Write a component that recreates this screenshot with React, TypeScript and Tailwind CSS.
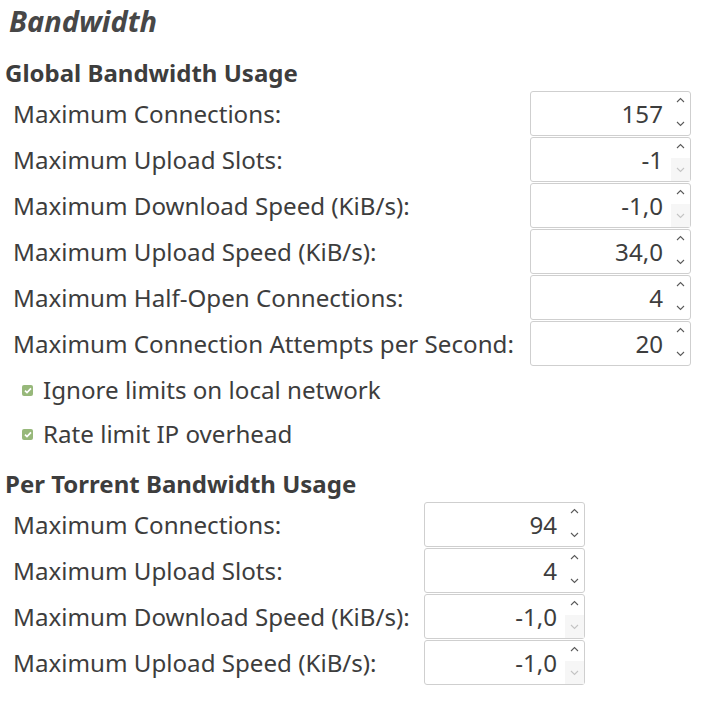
import React from "react";

const font = { fontFamily: '"Noto Sans", "Open Sans", sans-serif' };

function Chevron({ up, faint }: { up?: boolean; faint?: boolean }) {
  return (
    <svg width="9" height="6" viewBox="0 0 9 6" className="block">
      <polyline
        points={up ? "1,5 4.5,1.5 8,5" : "1,1 4.5,4.5 8,1"}
        fill="none"
        stroke={faint ? "#c4c4c4" : "#5a5a5a"}
        strokeWidth="1.1"
      />
    </svg>
  );
}

function Spin({ value, downDisabled }: { value: string; downDisabled?: boolean }) {
  return (
    <div className="flex h-[45px] w-[161px] rounded-[3px] border border-[#cfcfcf] bg-white">
      <div className="flex flex-1 items-center justify-end pr-[8px] pt-[1px] text-[24.15px] leading-none text-[#3d3d3d]">{value}</div>
      <div className="flex w-[19px] flex-col">
        <div className="flex flex-1 items-start justify-center pt-[5px]">
          <Chevron up />
        </div>
        <div
          className={
            downDisabled
              ? "flex flex-1 items-end justify-center bg-[#f6f6f6] pb-[8px]"
              : "flex flex-1 items-end justify-center pb-[8px]"
          }
        >
          <Chevron faint={downDisabled} />
        </div>
      </div>
    </div>
  );
}

function Row({ label, value, labelW, downDisabled }: { label: string; value: string; labelW: string; downDisabled?: boolean }) {
  return (
    <div className="flex items-center">
      <div className={labelW + " pt-[2px] text-[24.15px] leading-none text-[#3d3d3d]"}>{label}</div>
      <Spin value={value} downDisabled={downDisabled} />
    </div>
  );
}

function Check({ label }: { label: string }) {
  return (
    <div className="flex h-[44px] items-center gap-[10px] pl-[22px]">
      <div className="flex h-[11px] w-[11px] items-center justify-center rounded-[2px] bg-[#97b87a]">
        <svg width="8" height="7" viewBox="0 0 8 7">
          <polyline points="1,3.6 3,5.6 7,1.4" fill="none" stroke="white" strokeWidth="1.7" />
        </svg>
      </div>
      <div className="text-[24.15px] leading-none text-[#3d3d3d]">{label}</div>
    </div>
  );
}

export default function App() {
  return (
    <div className="h-[706px] w-[704px] bg-white" style={font}>
      <div className="flex h-[40px] items-center pl-[9px] text-[29px] font-bold italic leading-none text-[#474747]">Bandwidth</div>
      <div className="mt-[18px] flex h-[30px] items-center pl-[5px] text-[24px] font-bold leading-none text-[#3d3d3d]">
        Global Bandwidth Usage
      </div>
      <div className="mt-[3px] flex flex-col gap-[1px] pl-[13px]">
        <Row labelW="w-[517px]" label="Maximum Connections:" value="157" />
        <Row labelW="w-[517px]" label="Maximum Upload Slots:" value="-1" downDisabled />
        <Row labelW="w-[517px]" label="Maximum Download Speed (KiB/s):" value="-1,0" downDisabled />
        <Row labelW="w-[517px]" label="Maximum Upload Speed (KiB/s):" value="34,0" />
        <Row labelW="w-[517px]" label="Maximum Half-Open Connections:" value="4" />
        <Row labelW="w-[517px]" label="Maximum Connection Attempts per Second:" value="20" />
      </div>
      <div className="mt-[2px]">
        <Check label="Ignore limits on local network" />
        <Check label="Rate limit IP overhead" />
      </div>
      <div className="mt-[13px] flex h-[30px] items-center pl-[5px] text-[24px] font-bold leading-none text-[#3d3d3d]">
        Per Torrent Bandwidth Usage
      </div>
      <div className="mt-[3px] flex flex-col gap-[1px] pl-[13px]">
        <Row labelW="w-[411px]" label="Maximum Connections:" value="94" />
        <Row labelW="w-[411px]" label="Maximum Upload Slots:" value="4" />
        <Row labelW="w-[411px]" label="Maximum Download Speed (KiB/s):" value="-1,0" downDisabled />
        <Row labelW="w-[411px]" label="Maximum Upload Speed (KiB/s):" value="-1,0" downDisabled />
      </div>
    </div>
  );
}
